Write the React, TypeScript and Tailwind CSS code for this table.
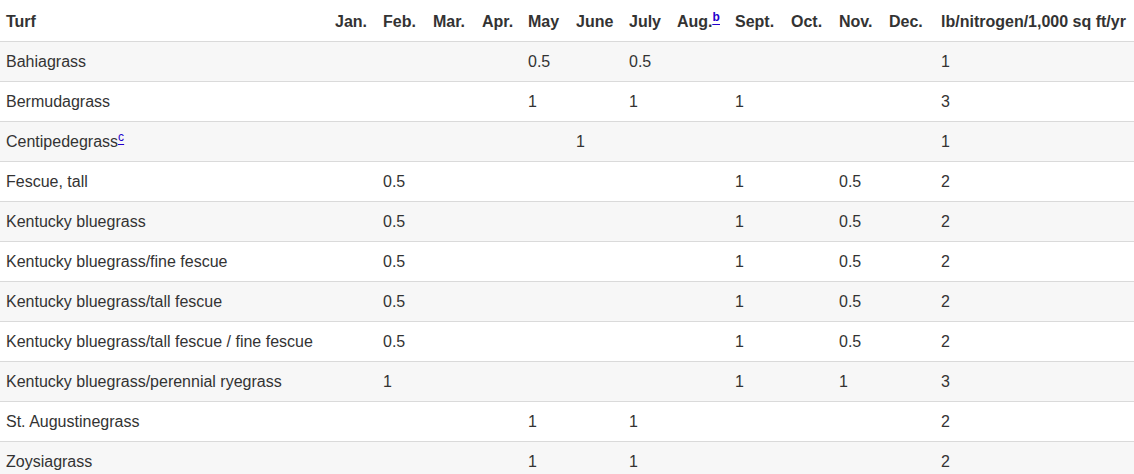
const MONTHS = ["Jan.", "Feb.", "Mar.", "Apr.", "May", "June", "July", "Aug.", "Sept.", "Oct.", "Nov.", "Dec."];
const WIDTHS = [329, 48, 50, 49, 46, 48, 53, 48, 58, 56, 48, 50, 52, 199];

type Row = { turf: string; note?: string; cells: Record<number, string>; total: string };

// month index -> amount
const ROWS: Row[] = [
  { turf: "Bahiagrass", cells: { 4: "0.5", 6: "0.5" }, total: "1" },
  { turf: "Bermudagrass", cells: { 4: "1", 6: "1", 8: "1" }, total: "3" },
  { turf: "Centipedegrass", note: "c", cells: { 5: "1" }, total: "1" },
  { turf: "Fescue, tall", cells: { 1: "0.5", 8: "1", 10: "0.5" }, total: "2" },
  { turf: "Kentucky bluegrass", cells: { 1: "0.5", 8: "1", 10: "0.5" }, total: "2" },
  { turf: "Kentucky bluegrass/fine fescue", cells: { 1: "0.5", 8: "1", 10: "0.5" }, total: "2" },
  { turf: "Kentucky bluegrass/tall fescue", cells: { 1: "0.5", 8: "1", 10: "0.5" }, total: "2" },
  { turf: "Kentucky bluegrass/tall fescue / fine fescue", cells: { 1: "0.5", 8: "1", 10: "0.5" }, total: "2" },
  { turf: "Kentucky bluegrass/perennial ryegrass", cells: { 1: "1", 8: "1", 10: "1" }, total: "3" },
  { turf: "St. Augustinegrass", cells: { 4: "1", 6: "1" }, total: "2" },
  { turf: "Zoysiagrass", cells: { 4: "1", 6: "1" }, total: "2" },
];

function Note({ label }: { label: string }) {
  return (
    <sup className="text-[12px] text-[#2200cc] underline underline-offset-[3px]">
      <a href="#">{label}</a>
    </sup>
  );
}

export default function App() {
  return (
    <div className="bg-white font-['Liberation_Sans',Arial,sans-serif] text-[16px] text-[#333]">
      <table className="w-[1134px] table-fixed border-collapse">
        <colgroup>
          {WIDTHS.map((w, i) => (
            <col key={i} style={{ width: w }} />
          ))}
        </colgroup>
        <thead>
          <tr className="border-b border-[#dadada]">
            <th className="whitespace-nowrap pl-[6px] pt-[10px] pb-[8px] text-left font-bold leading-[23px]">Turf</th>
            {MONTHS.map((m) => (
              <th key={m} className="whitespace-nowrap pl-[6px] pt-[10px] pb-[8px] text-left font-bold leading-[23px]">
                {m}
                {m === "Aug." ? <Note label="b" /> : null}
              </th>
            ))}
            <th className="whitespace-nowrap pl-[6px] pt-[10px] pb-[8px] text-left font-bold leading-[23px]">
              lb/nitrogen/1,000 sq ft/yr
            </th>
          </tr>
        </thead>
        <tbody>
          {ROWS.map((row, r) => (
            <tr key={row.turf} className={`border-b border-[#dadada] ${r % 2 === 0 ? "bg-[#f7f7f7]" : "bg-white"}`}>
              <td className="whitespace-nowrap py-[8px] pl-[6px] leading-[23px]">
                {row.turf}
                {row.note ? <Note label={row.note} /> : null}
              </td>
              {MONTHS.map((m, i) => (
                <td key={m} className="whitespace-nowrap py-[8px] pl-[6px] leading-[23px]">
                  {row.cells[i] ?? ""}
                </td>
              ))}
              <td className="whitespace-nowrap py-[8px] pl-[6px] leading-[23px]">{row.total}</td>
            </tr>
          ))}
        </tbody>
      </table>
    </div>
  );
}
